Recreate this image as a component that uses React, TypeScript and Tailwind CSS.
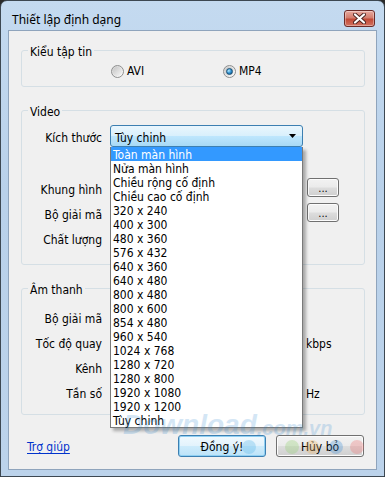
import React from "react";

const ui = "font-['DejaVu_Sans_Condensed','DejaVu_Sans',sans-serif] font-stretch-condensed";

const sizes = [
  "Toàn màn hình",
  "Nửa màn hình",
  "Chiều rộng cố định",
  "Chiều cao cố định",
  "320 x 240",
  "400 x 300",
  "480 x 360",
  "576 x 432",
  "640 x 360",
  "640 x 480",
  "800 x 480",
  "800 x 600",
  "854 x 480",
  "960 x 540",
  "1024 x 768",
  "1280 x 720",
  "1280 x 800",
  "1920 x 1080",
  "1920 x 1200",
  "Tùy chinh",
];

const btn =
  "rounded-[3px] border border-[#707070] bg-[linear-gradient(#f2f2f2_0%,#ebebeb_48%,#dddddd_52%,#cfcfcf_100%)] shadow-[inset_0_0_0_1px_#fcfcfc]";

const Radio: React.FC<{ checked?: boolean; label: string }> = ({ checked, label }) => (
  <label className="flex items-center gap-[3px]">
    <span className="w-[13px] h-[13px] rounded-full border border-[#8e8f8f] bg-[linear-gradient(135deg,#cfcfcf,#ffffff)] flex items-center justify-center">
      <span className="w-[9px] h-[9px] rounded-full bg-[linear-gradient(135deg,#c4c4c4,#f7f7f7)] flex items-center justify-center">
        {checked && (
          <span className="w-[7px] h-[7px] rounded-full border border-[#1a4f74] bg-[radial-gradient(circle_at_35%_35%,#b8ecff,#2c8fd0_50%,#0b4a78)]" />
        )}
      </span>
    </span>
    <span>{label}</span>
  </label>
);

const Row: React.FC<{ label: string; className: string; children?: React.ReactNode }> = ({
  label,
  className,
  children,
}) => (
  <div className={`flex items-center gap-[8px] ${className}`}>
    <div className="w-[80px] h-[14px] leading-[18px] text-right whitespace-nowrap">{label}</div>
    {children}
  </div>
);

const Group: React.FC<{ title: string; className: string; children?: React.ReactNode }> = ({
  title,
  className,
  children,
}) => (
  <fieldset className={`ml-[12px] mr-[11px] rounded-[3px] border border-[#d5dfe5] ${className}`}>
    <legend className="ml-[6px] px-[2px] h-[14px] leading-[19px]">{title}</legend>
    {children}
  </fieldset>
);

export default function App() {
  return (
    <div className={`w-[385px] h-[477px] bg-[#2a2a2a] text-[12px] text-black ${ui}`}>
      <div className="h-full flex flex-col rounded-t-[7px] border border-[#3d4852] bg-[linear-gradient(#c4daf0,#b9d1ea_40%,#bcd3eb)] px-[7px] pb-[6px]">
        {/* title bar */}
        <div className="h-[29px] flex items-start justify-between">
          <div className="pl-[4px] pt-[11px] font-['Noto_Sans',sans-serif] text-[12px] leading-[16px]">
            Thiết lập định dạng
          </div>
          <div className="mt-[9px] mr-[2px] w-[31px] h-[17px] rounded-[3px] border border-[#6b2b28] bg-[linear-gradient(#e8a99f,#d37d6e_45%,#c24a37_55%,#d27362)] flex items-center justify-center shadow-[inset_0_0_0_1px_rgba(255,255,255,0.35)]">
            <svg width="13" height="11" viewBox="0 0 13 11">
              <path d="M2 1.5 L11 9.5 M11 1.5 L2 9.5" stroke="#4a2320" strokeWidth="4" strokeLinecap="round" />
              <path d="M2 1.5 L11 9.5 M11 1.5 L2 9.5" stroke="#ffffff" strokeWidth="2.2" strokeLinecap="round" />
            </svg>
          </div>
        </div>

        {/* client area */}
        <div className="flex-1 relative flex flex-col bg-[#f0f0f0] border border-[#8fa4bc]">
          <Group title="Kiểu tập tin" className="mt-[12px] h-[44px]">
            <div className="mt-[6px] h-[16px] flex items-center pl-[89px]">
              <div className="w-[112px]">
                <Radio label="AVI" />
              </div>
              <Radio checked label="MP4" />
            </div>
          </Group>

          <Group title="Video" className="mt-[16px] h-[162px]">
            <Row label="Kích thước" className="mt-[8px] h-[22px]">
              <div className="relative">
                <div className="w-[193px] h-[22px] rounded-[3px] border border-[#3c7fb1] bg-[linear-gradient(#eaf6fd_0%,#d9f0fc_48%,#bee6fd_52%,#a7d9f5_100%)] flex items-center justify-between pl-[4px] pr-[6px]">
                  <span className="h-[14px] leading-[18px]">Tùy chinh</span>
                  <svg width="7" height="4" viewBox="0 0 7 4">
                    <path d="M0 0 H7 L3.5 4 Z" fill="#000" />
                  </svg>
                </div>
                <ul className="absolute left-0 top-full z-10 w-[193px] bg-white border border-t-0 border-[#7a7a7a] shadow-[3px_3px_3px_rgba(0,0,0,0.3)]">
                  {sizes.map((s, i) => (
                    <li
                      key={i}
                      className={`h-[14px] leading-[17px] pl-[2px] whitespace-nowrap ${
                        i === 0 ? "bg-[#3399ff] text-white" : "text-black"
                      }`}
                    >
                      {s}
                    </li>
                  ))}
                </ul>
              </div>
            </Row>
            <Row label="Khung hình" className="mt-[31px] h-[19px]">
              <div className="w-[192px]" />
              <button className={`${btn} -ml-[3px] w-[32px] h-[19px] text-[11px] leading-[12px] pt-[2px]`}>...</button>
            </Row>
            <Row label="Bộ giải mã" className="mt-[6px] h-[19px]">
              <div className="w-[192px]" />
              <button className={`${btn} -ml-[3px] w-[32px] h-[19px] text-[11px] leading-[12px] pt-[2px]`}>...</button>
            </Row>
            <Row label="Chất lượng" className="mt-[6px] h-[19px]" />
          </Group>

          <Group title="Âm thanh" className="mt-[16px] h-[134px]">
            <Row label="Bộ giải mã" className="mt-[11px] h-[21px]" />
            <Row label="Tốc độ quay" className="mt-[4px] h-[21px]">
              <div className="w-[192px]" />
              <span className="-ml-[4px] h-[14px] leading-[18px]">kbps</span>
            </Row>
            <Row label="Kênh" className="mt-[4px] h-[21px]" />
            <Row label="Tần số" className="mt-[4px] h-[21px]">
              <div className="w-[192px]" />
              <span className="-ml-[4px] h-[14px] leading-[18px]">Hz</span>
            </Row>
          </Group>

          <div className="mt-[20px] h-[22px] flex items-center justify-between pl-[18px] pr-[12px]">
            <a className="text-[#0033cc] underline underline-offset-2 h-[14px] leading-[17px]">Trợ giúp</a>
            <div className="flex gap-[10px]">
              <button className="w-[88px] h-[22px] pt-[2px] rounded-[3px] border border-[#3c7fb1] bg-[linear-gradient(#f0f9fe_0%,#e3f3fc_48%,#cdebfb_52%,#bde3f8_100%)] shadow-[inset_0_0_0_1px_#8fd0f3]">
                Đồng ý!
              </button>
              <button className={`${btn} w-[88px] h-[22px] pt-[2px]`}>Hủy bỏ</button>
            </div>
          </div>

          {/* watermark */}
          <div className="absolute z-20 pointer-events-none left-[114px] top-[380px] flex items-end italic font-bold font-['Liberation_Sans',sans-serif] text-[#2f87cf] opacity-20">
            <span className="text-[28px] leading-[28px]">Download</span>
            <span className="text-[20px] leading-[22px]">.com.vn</span>
          </div>
          <div className="absolute z-20 pointer-events-none left-[233px] top-[409px] flex opacity-30">
            <span className="w-[14px] h-[14px] rounded-full bg-[#4fb3e8]" />
            <span className="ml-[29px] w-[14px] h-[14px] rounded-full bg-[#8fd06b]" />
            <span className="ml-[6px] w-[14px] h-[14px] rounded-full bg-[#f2b25a]" />
            <span className="ml-[10px] w-[14px] h-[14px] rounded-full bg-[#3d8fd8]" />
            <span className="ml-[7px] w-[14px] h-[14px] rounded-full bg-[#ef6b6b]" />
          </div>
        </div>
      </div>
    </div>
  );
}
